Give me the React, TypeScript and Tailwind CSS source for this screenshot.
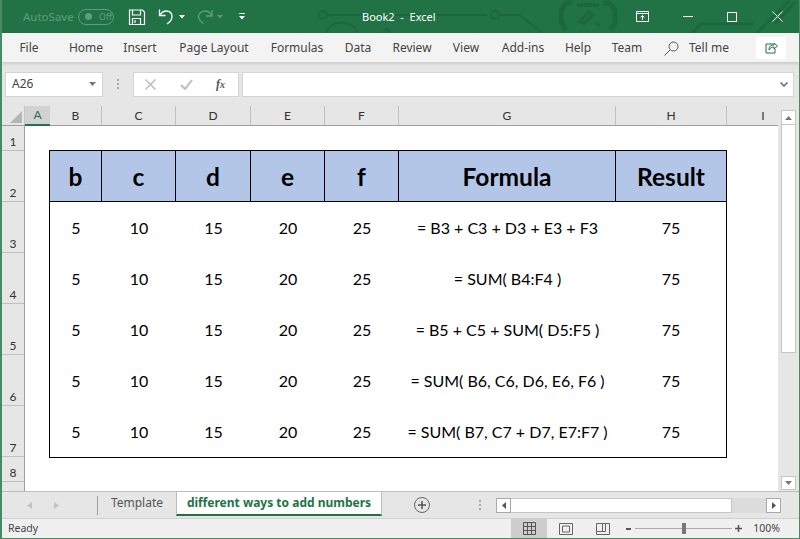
import React from "react";

const colHeads: [string, number][] = [["B", 52], ["C", 74], ["D", 75], ["E", 74], ["F", 74], ["G", 217], ["H", 111], ["I", 72]];
const rowHeads: [string, number][] = [["1", 25], ["2", 51], ["3", 51], ["4", 51], ["5", 51], ["6", 51], ["7", 51], ["8", 25]];
const cellW = [52, 74, 75, 74, 74, 217, 110];
const formulas = [
  "= B3 + C3 + D3 + E3 + F3",
  "= SUM( B4:F4 )",
  "= B5 + C5 + SUM( D5:F5 )",
  "= SUM( B6, C6, D6, E6, F6 )",
  "= SUM( B7, C7 + D7, E7:F7 )",
];
const tabs: [string, string][] = [["File", "w-[54px]"], ["Home", "w-[60px]"], ["Insert", "w-[48px]"], ["Page Layout", "w-[100px]"], ["Formulas", "w-[66px]"], ["Data", "w-[56px]"], ["Review", "w-[52px]"], ["View", "w-[56px]"], ["Add-ins", "w-[58px]"], ["Help", "w-[52px]"], ["Team", "w-[46px]"]];

export default function App() {
  return (
    <div className="w-[800px] h-[539px] overflow-hidden bg-[#e6e6e6] flex flex-col font-['Noto_Sans','Open_Sans',sans-serif] border-l-[2px] border-r-[1px] border-b-[1px] border-[#217346]/80">
      {/* Title bar */}
      <div className="-ml-[2px] -mr-[1px] h-[33px] shrink-0 bg-[#217346] relative flex items-center text-white">
        <svg className="absolute inset-0 pointer-events-none" width="800" height="33" fill="none" stroke="#1c683d" strokeWidth="2">
          <path d="M327 15h160M500 15h20l22 18" />
          <circle cx="323" cy="15" r="4" />
          <circle cx="495" cy="15" r="4" />
          <path d="M326 33c4-14 26-14 32 0" />
          <path d="M383 33l4-4 4 4" />
          <path d="M572 3h-6l-5 7v12l5 8M603 3h6l6 7v14l-5 6" strokeWidth="5" />
          <path d="M577 5h22" strokeWidth="4" />
          <path d="M580 21l9-9 4 3-9 9zM596 23l4 3" strokeWidth="3" />
          <path d="M692 33l9-9h52" strokeWidth="3" />
          <path d="M757 33l32-32M775 24l20-22" strokeWidth="3" />
        </svg>
        <span className="relative ml-[23px] text-[11.5px] text-[#5f9c7c] w-[48px] leading-none">AutoSave</span>
        <span className="relative ml-[7px] w-[36px] h-[16px] rounded-full border border-[#5f9c7c] flex items-center text-[9px] text-[#5f9c7c]">
          <span className="ml-[6px] w-[7px] h-[7px] rounded-full bg-[#5f9c7c]" />
          <span className="ml-[7px] leading-none">Off</span>
        </span>
        <svg className="relative ml-[14px]" width="18" height="18" viewBox="0 0 18 18" fill="none" stroke="#fff" strokeWidth="1.2">
          <path d="M1.500 2h13l2 2v12.500h-15z" />
          <path d="M4.500 2v5h8V2M4.500 16.500v-6h8v6M7 12v3" />
        </svg>
        <svg className="relative ml-[11px]" width="19" height="18" viewBox="0 0 19 18" fill="none" stroke="#fff" strokeWidth="1.3">
          <path d="M2.500 1.500v6h6M3 7c2-3 4-4 6-4 3.500 0 6 2 6 5.500 0 3-2 5.500-5 7.500" />
        </svg>
        <svg className="relative ml-[3px]" width="7" height="4" viewBox="0 0 7 4" fill="#fff"><path d="M0 0h6L3 3.500z" /></svg>
        <svg className="relative ml-[10px]" width="18" height="18" viewBox="0 0 18 18" fill="none" stroke="#5f9c7c" strokeWidth="1.300">
          <path d="M16 2v6h-6M15.500 7c-2-3-4-4-6-4C6 3 2.500 5 2.500 8.500c0 3 2 5 5 7" />
        </svg>
        <svg className="relative ml-[3px]" width="7" height="4" viewBox="0 0 7 4" fill="#5f9c7c"><path d="M0 0h6L3 3.500z" /></svg>
        <svg className="relative ml-[15px]" width="7" height="7" viewBox="0 0 7 7" fill="#fff"><path d="M0 0h6v1H0zM0 3h6L3 6.500z" /></svg>
        <span className="absolute left-[362px] top-[9px] text-[11px] leading-[15px] whitespace-pre">Book2  -  Excel</span>
        <div className="ml-auto flex items-center relative">
          <svg width="13" height="11" viewBox="0 0 13 11" fill="none" stroke="#fff"><path d="M.5.5h12v10H.5zM.5 2.500h12M6.500 9V4.500M4.500 6.500l2-2 2 2" /></svg>
          <div className="w-[10px] h-[1px] bg-white ml-[34px]" />
          <div className="w-[10px] h-[10px] border border-white ml-[34px]" />
          <svg className="ml-[35px] mr-[17px]" width="11" height="11" viewBox="0 0 11 11" stroke="#fff" fill="none"><path d="M.5.5l10 10M10.500.5l-10 10" /></svg>
        </div>
      </div>

      {/* Ribbon tabs */}
      <div className="h-[29px] shrink-0 bg-[#f3f3f3] flex items-center text-[12px] text-[#444] shadow-[0_2px_3px_rgba(0,0,0,0.12)] relative">
        <div className="flex w-[765px] items-center pt-[1px]">
          <div className="flex">
            {tabs.map(([t, w]) => (
              <span key={t} className={`${w} text-center leading-[16px]`}>{t}</span>
            ))}
          </div>
          <svg className="ml-[14px]" width="15" height="15" viewBox="0 0 15 15" fill="none" stroke="#555"><circle cx="9.500" cy="5.500" r="4.500" /><path d="M6 9l-5.500 5.500" /></svg>
          <span className="ml-[10px] leading-[16px]">Tell me</span>
        </div>
        <div className="ml-[-11px] w-[30px] h-[22px] bg-white rounded-[2px] flex items-center justify-center">
          <svg width="13" height="13" viewBox="0 0 13 13" fill="none" stroke="#217346"><path d="M8 3H1v9h9V8M4 9c0-4 2-5 5-5V2l3.500 3L9 8V6C7 6 5 7 4 9z" /></svg>
        </div>
      </div>

      {/* Formula bar */}
      <div className="h-[44px] shrink-0 flex items-center text-[#444]">
        <div className="ml-[3px] w-[98px] h-[25px] bg-white border border-[#d4d4d4] flex items-center justify-between pl-[6px] pr-[6px] text-[12px]">
          <span>A26</span>
          <svg width="7" height="4" viewBox="0 0 7 4" fill="#777"><path d="M0 0h7L3.500 4z" /></svg>
        </div>
        <div className="w-[30px] flex flex-col items-center gap-[2px]">
          <i className="w-[2px] h-[2px] bg-[#aaa]" /><i className="w-[2px] h-[2px] bg-[#aaa]" /><i className="w-[2px] h-[2px] bg-[#aaa]" />
        </div>
        <div className="w-[106px] h-[25px] bg-white border border-[#d4d4d4] flex items-center">
          <svg className="ml-[11px]" width="11" height="11" viewBox="0 0 11 11" fill="none" stroke="#bdbdbd" strokeWidth="1.500"><path d="M.5.5l10 10M10.500.5l-10 10" /></svg>
          <svg className="ml-[24px]" width="13" height="11" viewBox="0 0 13 11" fill="none" stroke="#bdbdbd" strokeWidth="2"><path d="M1 6l4 4 7-9" /></svg>
          <span className="ml-[23px] text-[12px] italic font-['Liberation_Serif',serif] font-bold text-[#555] leading-none">f<span className="text-[10px]">x</span></span>
        </div>
        <div className="ml-[3px] w-[552px] h-[25px] bg-white border border-[#d4d4d4] flex items-center justify-end pr-[5px]">
          <svg width="8" height="5" viewBox="0 0 8 5" fill="none" stroke="#666" strokeWidth="1.500"><path d="M.5.5L4 4 7.500.5" /></svg>
        </div>
      </div>

      {/* Sheet + scrollbar */}
      <div className="flex-1 min-h-0 flex items-stretch">
        <div className="w-[776px] flex flex-col overflow-hidden">
          {/* Column headers */}
          <div className="h-[20px] shrink-0 flex text-[12px] text-[#333] font-['Lato',sans-serif] border-b border-[#9f9f9f]">
            <div className="w-[23px] shrink-0 relative border-r border-[#c6c6c6]">
              <div className="absolute right-[2px] bottom-[2px] w-0 h-0 border-l-[12px] border-l-transparent border-b-[12px] border-b-[#b5b5b5]" />
            </div>
            <div className="w-[25px] shrink-0 h-[20px] bg-[#d2d2d2] border-b-2 border-[#217346] text-[#217346] flex items-center justify-center">A</div>
            {colHeads.map(([c, w]) => (
              <div key={c} style={{ width: w }} className="shrink-0 flex items-center justify-center border-r border-[#c0c0c0] last:border-r-0">{c}</div>
            ))}
          </div>
          <div className="flex-1 flex min-h-0">
            {/* Row headers */}
            <div className="w-[23px] shrink-0 border-r border-[#9f9f9f] text-[12px] text-[#333] font-['Lato',sans-serif]">
              {rowHeads.map(([r, h]) => (
                <div key={r} style={{ height: h }} className="flex items-end justify-center border-b border-[#c0c0c0] leading-[16px]">{r}</div>
              ))}
            </div>
            {/* Cells */}
            <div className="flex-1 bg-white pt-[24px] pl-[24px] font-['Lato',sans-serif] text-black">
              <div className="w-[678px] h-[308px] border border-black flex flex-col">
                <div className="h-[51px] shrink-0 bg-[#b4c6e7] flex border-b border-black text-[24.5px] font-bold">
                  {["b", "c", "d", "e", "f", "Formula", "Result"].map((t, i) => (
                    <div key={t} style={{ width: cellW[i] }} className="flex items-center justify-center border-r border-black last:border-r-0 leading-none pt-[2px]">{t}</div>
                  ))}
                </div>
                {formulas.map((f) => (
                  <div key={f} className="h-[51px] flex items-center text-[16px] leading-none pt-[1px]">
                    {["5", "10", "15", "20", "25", f, "75"].map((t, i) => (
                      <div key={i} style={{ width: cellW[i] }} className="text-center">{t}</div>
                    ))}
                  </div>
                ))}
              </div>
            </div>
          </div>
        </div>
        {/* Vertical scrollbar */}
        <div className="w-[20px] shrink-0 pl-[3px] flex flex-col bg-[#e6e6e6]">
          <div className="w-[15px] h-[15px] mt-[4px] bg-white border border-[#c6c6c6] flex items-center justify-center">
            <svg width="7" height="4" viewBox="0 0 7 4" fill="#777"><path d="M3.500 0L7 4H0z" /></svg>
          </div>
          <div className="w-[15px] h-[228px] bg-white border border-[#c6c6c6] border-t-0" />
          <div className="flex-1" />
          <div className="w-[15px] h-[14px] bg-white border border-[#c6c6c6] flex items-center justify-center mb-[1px]">
            <svg width="7" height="4" viewBox="0 0 7 4" fill="#777"><path d="M0 0h7L3.500 4z" /></svg>
          </div>
        </div>
      </div>

      {/* Sheet tabs */}
      <div className="h-[27px] shrink-0 flex items-center border-t border-[#bdbdbd] bg-[#e6e6e6] text-[12px] font-['Noto_Sans',sans-serif]">
        <svg className="ml-[25px]" width="5" height="7" viewBox="0 0 5 7" fill="#c2c2c2"><path d="M5 0v7L0 3.500z" /></svg>
        <svg className="ml-[22px]" width="5" height="7" viewBox="0 0 5 7" fill="#c2c2c2"><path d="M0 0v7l5-3.500z" /></svg>
        <div className="ml-[38px] h-[19px] w-[1px] bg-[#9f9f9f]" />
        <div className="w-[78px] h-[24px] -mt-[3px] pb-[1px] flex items-center justify-center text-[#555]">Template</div>
        <div className="h-[24px] -mt-[3px] w-[206px] bg-white border-x border-b-2 border-[#bdbdbd] border-b-[#217346] flex items-center justify-center font-bold text-[#217346] whitespace-nowrap">different ways to add numbers</div>
        <div className="ml-[32px] w-[16px] h-[16px] rounded-full border border-[#666] flex items-center justify-center text-[#555]">
          <svg width="8" height="8" viewBox="0 0 8 8" stroke="#555" strokeWidth="1.500"><path d="M4 0v8M0 4h8" /></svg>
        </div>
        <div className="ml-[49px] flex flex-col gap-[2px]">
          <i className="w-[2px] h-[2px] bg-[#aaa]" /><i className="w-[2px] h-[2px] bg-[#aaa]" /><i className="w-[2px] h-[2px] bg-[#aaa]" />
        </div>
        <div className="ml-[15px] w-[15px] h-[15px] bg-white border border-[#aaa] flex items-center justify-center">
          <svg width="4" height="7" viewBox="0 0 4 7" fill="#555"><path d="M4 0v7L0 3.500z" /></svg>
        </div>
        <div className="w-[221px] h-[15px] bg-white border border-[#c6c6c6] border-l-0" />
        <div className="w-[34px] h-[15px] bg-[#dcdcdc]" />
        <div className="w-[15px] h-[15px] bg-white border border-[#aaa] flex items-center justify-center">
          <svg width="4" height="7" viewBox="0 0 4 7" fill="#555"><path d="M0 0v7l4-3.500z" /></svg>
        </div>
      </div>

      {/* Status bar */}
      <div className="h-[20px] shrink-0 flex items-center bg-[#f0f0f0] border-t border-[#d0d0d0] text-[10.5px] text-[#444]">
        <span className="ml-[6px]">Ready</span>
        <div className="ml-auto flex items-center h-full">
          <div className="w-[36px] h-full bg-[#cdcdcd] flex items-center justify-center">
            <svg width="13" height="13" viewBox="0 0 13 13" fill="none" stroke="#555"><path d="M.5.5h12v12H.5zM4.500.5v12M8.500.5v12M.5 4.500h12M.5 8.500h12" /></svg>
          </div>
          <svg className="ml-[12px]" width="14" height="12" viewBox="0 0 14 12" fill="none" stroke="#666"><path d="M.5.5h13v11H.5zM3.500 3h7v6h-7z" /></svg>
          <svg className="ml-[23px]" width="14" height="12" viewBox="0 0 14 12" fill="none" stroke="#666"><path d="M.5.500h13v11H.5zM.5 8.500h9M6.500 .5v8M9.500.5v8" /></svg>
          <span className="ml-[16px] w-[5px] h-[2px] bg-[#555]" />
          <div className="ml-[4px] w-[97px] h-[1px] bg-[#aaa] relative flex justify-center">
            <span className="absolute top-[-5px] w-[4px] h-[11px] bg-[#777]" />
          </div>
          <svg className="ml-[3px]" width="7" height="7" viewBox="0 0 7 7" stroke="#555" strokeWidth="1.500"><path d="M3.500 0v7M0 3.500h7" /></svg>
          <span className="ml-[11px] mr-[19px] leading-none">100%</span>
        </div>
      </div>
    </div>
  );
}
